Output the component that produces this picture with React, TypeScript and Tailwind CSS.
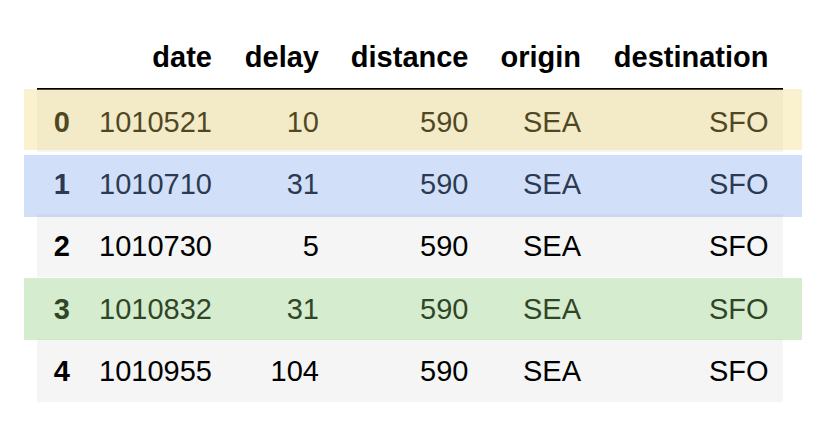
import React from "react";

const rows = [
  ["0", "1010521", "10", "590", "SEA", "SFO"],
  ["1", "1010710", "31", "590", "SEA", "SFO"],
  ["2", "1010730", "5", "590", "SEA", "SFO"],
  ["3", "1010832", "31", "590", "SEA", "SFO"],
  ["4", "1010955", "104", "590", "SEA", "SFO"],
];

export default function App() {
  return (
    <div className="relative w-[818px] h-[426px] bg-white overflow-hidden" style={{ fontFamily: '"Liberation Sans", Arial, sans-serif' }}>
      <div className="pl-[37px] pt-[27px]">
        <table className="table-fixed border-collapse w-[745.5px] text-[29px] text-black leading-none">
          <colgroup>
            <col className="w-[47px]" />
            <col className="w-[142px]" />
            <col className="w-[107px]" />
            <col className="w-[149.5px]" />
            <col className="w-[112.5px]" />
            <col className="w-[187.5px]" />
          </colgroup>
          <thead>
            <tr className="h-[62px] border-b-2 border-black">
              <th className="pr-[14px] text-right font-bold"></th>
              <th className="pr-[14px] text-right font-bold">date</th>
              <th className="pr-[14px] text-right font-bold">delay</th>
              <th className="pr-[14px] text-right font-bold">distance</th>
              <th className="pr-[14px] text-right font-bold">origin</th>
              <th className="pr-[14px] text-right font-bold">destination</th>
            </tr>
          </thead>
          <tbody>
            {rows.map((r, i) => (
              <tr key={i} className={i % 2 === 0 ? "h-[62.5px] bg-[#f5f5f5]" : "h-[62.5px] bg-white"}>
                <td className="pt-[3px] pr-[14px] text-right font-bold">{r[0]}</td>
                <td className="pt-[3px] pr-[14px] text-right">{r[1]}</td>
                <td className="pt-[3px] pr-[14px] text-right">{r[2]}</td>
                <td className="pt-[3px] pr-[14px] text-right">{r[3]}</td>
                <td className="pt-[3px] pr-[14px] text-right">{r[4]}</td>
                <td className="pt-[3px] pr-[14px] text-right">{r[5]}</td>
              </tr>
            ))}
          </tbody>
        </table>
      </div>
      <div className="absolute left-[24px] top-[89px] w-[778px] h-[61px] bg-[rgba(240,215,110,0.33)]" />
      <div className="absolute left-[24px] top-[155px] w-[778px] h-[62px] bg-[rgba(123,166,234,0.35)]" />
      <div className="absolute left-[24px] top-[278px] w-[778px] h-[62px] bg-[rgba(136,200,113,0.345)]" />
    </div>
  );
}
